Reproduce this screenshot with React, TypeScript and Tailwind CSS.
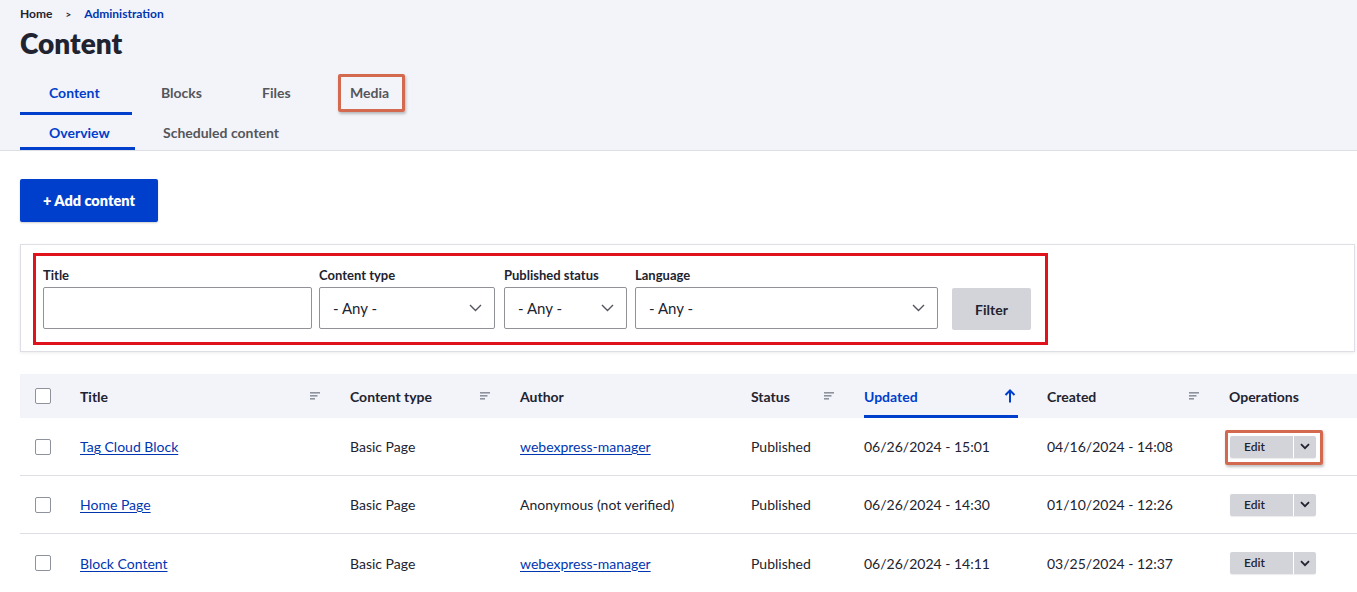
import React from "react";

const FONT = { fontFamily: "Lato, 'Noto Sans', sans-serif" };

const SortIcon = () => (
  <svg width="10" height="8" viewBox="0 0 10 8" className="shrink-0">
    <rect x="0" y="0" width="10" height="1.6" fill="#8e929c" />
    <rect x="0" y="3" width="7.5" height="1.6" fill="#8e929c" />
    <rect x="0" y="6" width="5" height="1.6" fill="#8e929c" />
  </svg>
);

const ArrowUp = () => (
  <svg width="12" height="14" viewBox="0 0 12 14" className="shrink-0">
    <path d="M6 13.5V1.5M1.5 6L6 1.5L10.5 6" fill="none" stroke="#003ecc" strokeWidth="2" />
  </svg>
);

const SelectChevron = () => (
  <svg width="13" height="8" viewBox="0 0 13 8" className="shrink-0">
    <path d="M1 1l5.5 5.5L12 1" fill="none" stroke="#545560" strokeWidth="1.4" />
  </svg>
);

const Checkbox = () => (
  <span className="block h-4 w-4 rounded-[2px] border border-[#8e929c] bg-white" />
);

const tabs = [
  { label: "Content", w: "w-[112px]" },
  { label: "Blocks", w: "w-[101px]" },
  { label: "Files", w: "w-[88px]" },
  { label: "Media", w: "w-[101px]" },
];

type Row = {
  title: string;
  author: string;
  authorLink: boolean;
  updated: string;
  created: string;
  highlight?: boolean;
};

const rows: Row[] = [
  { title: "Tag Cloud Block", author: "webexpress-manager", authorLink: true, updated: "06/26/2024 - 15:01", created: "04/16/2024 - 14:08", highlight: true },
  { title: "Home Page", author: "Anonymous (not verified)", authorLink: false, updated: "06/26/2024 - 14:30", created: "01/10/2024 - 12:26" },
  { title: "Block Content", author: "webexpress-manager", authorLink: true, updated: "06/26/2024 - 14:11", created: "03/25/2024 - 12:37" },
];

const GRID = "grid grid-cols-[60px_270px_170px_231px_113px_183px_182px_1fr]";

const EditButton = () => (
  <div className="flex h-[22px] w-[86px] overflow-hidden rounded-[2px] bg-[#d3d4d9] shadow-[0_1px_1px_rgba(0,0,0,0.08)]">
    <span className="flex w-[63px] items-center pl-[14px] text-[12px] font-semibold text-[#222330]">Edit</span>
    <span className="w-px bg-white" />
    <span className="flex flex-1 items-center justify-center">
      <svg width="10" height="7" viewBox="0 0 10 7">
        <path d="M1 1.2l4 4 4-4" fill="none" stroke="#222330" strokeWidth="1.8" />
      </svg>
    </span>
  </div>
);

function Field({ label, width, select }: { label: string; width: string; select?: boolean }) {
  return (
    <div className={`flex flex-col ${width}`}>
      <label className="mb-[3px] text-[13px] font-bold leading-[18px] text-[#222330]">{label}</label>
      <div className="flex h-[42px] items-center justify-between rounded-[2px] border border-[#919297] bg-white pl-[13px] pr-[12px]">
        {select && <span className="text-[15px] text-[#222330]">- Any -</span>}
        {select && <SelectChevron />}
      </div>
    </div>
  );
}

export default function App() {
  return (
    <div className="min-h-[592px] bg-white text-[#222330]" style={FONT}>
      <header className="border-b border-[#dedfe4] bg-[#f3f4f9] pl-5 pt-[6px]">
        <nav className="flex items-center text-[12px] font-bold leading-4">
          <span className="text-[#222330]">Home</span>
          <span className="mx-[13px] text-[10px] text-[#222330]">&gt;</span>
          <span className="text-[#0036b1]">Administration</span>
        </nav>
        <h1 className="mt-[3px] text-[28px] font-extrabold leading-9 text-[#222330]">Content</h1>
        <div className="mt-[11px] flex">
          {tabs.map((t, i) => (
            <div
              key={t.label}
              className={`relative ${t.w} border-b-[3px] pl-[29px] pb-[9px] pt-[11px] text-[14px] font-bold leading-5 ${
                i === 0 ? "border-[#003ecc] text-[#003ecc]" : "border-transparent text-[#55565b]"
              }`}
            >
              {t.label}
              {t.label === "Media" && (
                <span className="absolute left-[17px] w-[67px] top-[2px] bottom-0 rounded-[2px] border-[3px] border-[#d36a4f] shadow-[1px_2px_3px_rgba(0,0,0,0.25)]" />
              )}
            </div>
          ))}
        </div>
        <div className="flex">
          <div className="w-[115px] border-b-[3px] border-[#003ecc] pb-[4px] pl-[29px] pt-[8px] text-[14px] font-bold leading-5 text-[#003ecc]">
            Overview
          </div>
          <div className="px-[28px] pb-[4px] pt-[8px] text-[14px] font-bold leading-5 text-[#55565b]">
            Scheduled content
          </div>
        </div>
      </header>

      <main className="pl-5 pr-[2px]">
        <button className="mt-[28px] h-[43px] w-[138px] rounded-[2px] bg-[#003ecc] text-[14.5px] font-extrabold text-white shadow-[0_1px_2px_rgba(0,0,0,0.2)]">
          + Add content
        </button>

        <section className="mt-[22px] h-[108px] border border-[#dedfe4] bg-white pl-[12px] pt-[8px] shadow-[0_1px_3px_rgba(0,0,0,0.08)]">
          <div className="flex w-[1015px] items-end border-[3px] border-[#e0121b] pb-[13px] pl-[7px] pr-[14px] pt-[10px]">
            <Field label="Title" width="w-[269px]" />
            <div className="ml-[7px]">
              <Field label="Content type" width="w-[176px]" select />
            </div>
            <div className="ml-[9px]">
              <Field label="Published status" width="w-[123px]" select />
            </div>
            <div className="ml-[8px]">
              <Field label="Language" width="w-[303px]" select />
            </div>
            <button className="mb-[-1px] ml-[14px] h-[42px] w-[79px] rounded-[2px] bg-[#d3d4d9] text-[14px] font-bold text-[#222330]">
              Filter
            </button>
          </div>
        </section>

        <div className="mt-[22px] mr-[-2px]">
          <div className={`${GRID} h-[44px] bg-[#f3f4f9] text-[14px] font-bold text-[#222330]`}>
            <div className="flex items-center pl-[15px]">
              <Checkbox />
            </div>
            <div className="flex items-center justify-between pr-[30px]">
              <span>Title</span>
              <SortIcon />
            </div>
            <div className="flex items-center justify-between pr-[30px]">
              <span>Content type</span>
              <SortIcon />
            </div>
            <div className="flex items-center">Author</div>
            <div className="flex items-center justify-between pr-[30px]">
              <span>Status</span>
              <SortIcon />
            </div>
            <div className="pr-[29px]">
              <div className="flex h-full items-center justify-between border-b-[3px] border-[#003ecc] pt-[3px] pr-[2px] text-[#003ecc]">
                <span>Updated</span>
                <ArrowUp />
              </div>
            </div>
            <div className="flex items-center justify-between pr-[30px]">
              <span>Created</span>
              <SortIcon />
            </div>
            <div className="flex items-center">Operations</div>
          </div>

          {rows.map((r, i) => (
            <div
              key={r.title}
              className={`${GRID} h-[58px] text-[14px] text-[#222330] ${i < rows.length - 1 ? "border-b border-[#dedfe4]" : ""}`}
            >
              <div className="flex items-center pl-[15px]">
                <Checkbox />
              </div>
              <div className="flex items-center">
                <a className="text-[#0036b1] underline underline-offset-2">{r.title}</a>
              </div>
              <div className="flex items-center">Basic Page</div>
              <div className="flex items-center">
                {r.authorLink ? (
                  <a className="text-[#0036b1] underline underline-offset-2">{r.author}</a>
                ) : (
                  <span>{r.author}</span>
                )}
              </div>
              <div className="flex items-center">Published</div>
              <div className="flex items-center">{r.updated}</div>
              <div className="flex items-center">{r.created}</div>
              <div className="flex items-center pl-px">
                <div className="relative">
                  <EditButton />
                  {r.highlight && (
                    <span className="absolute -left-[5px] -right-[7px] -top-[6px] -bottom-[7px] rounded-[2px] border-[3px] border-[#d36a4f] shadow-[1px_2px_3px_rgba(0,0,0,0.25)]" />
                  )}
                </div>
              </div>
            </div>
          ))}
        </div>
      </main>
    </div>
  );
}
